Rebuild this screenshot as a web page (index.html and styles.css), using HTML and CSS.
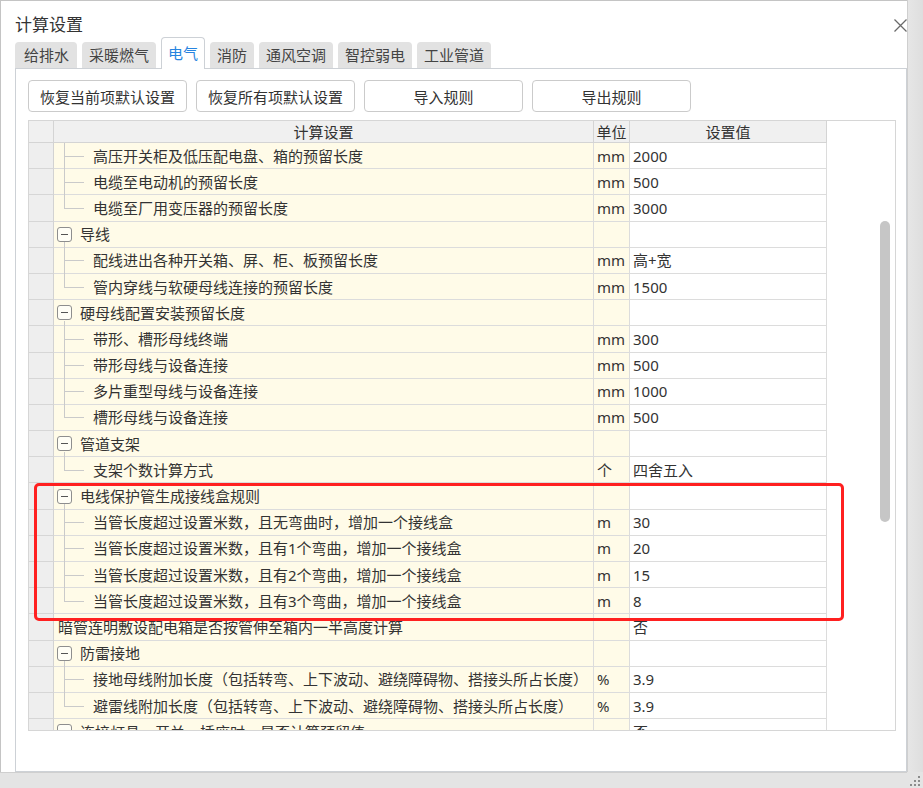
FILE: index.html
```html
<!DOCTYPE html>
<html lang="zh-CN">
<head>
<meta charset="utf-8">
<title>计算设置</title>
<link rel="stylesheet" href="styles.css">
</head>
<body>
<div class="screen">
  <div class="dialog">
    <div class="titlebar">
      <span class="title">计算设置</span>
      <svg class="close" width="13" height="13" viewBox="0 0 13 13"><path d="M0.5 0.5 L12.5 12.5 M12.5 0.5 L0.5 12.5" stroke="#6a6a6a" stroke-width="1.3" fill="none"/></svg>
    </div>
    <div class="tabs">
      <div class="tab tab-wide">给排水</div>
      <div class="tab">采暖燃气</div>
      <div class="tab active">电气</div>
      <div class="tab">消防</div>
      <div class="tab">通风空调</div>
      <div class="tab">智控弱电</div>
      <div class="tab">工业管道</div>
    </div>
    <div class="panel">
      <div class="toolbar">
        <button class="btn">恢复当前项默认设置</button>
        <button class="btn">恢复所有项默认设置</button>
        <button class="btn">导入规则</button>
        <button class="btn">导出规则</button>
      </div>
      <div class="grid">
        <div class="grid-body">
          <div class="row head">
            <div class="c rh"></div>
            <div class="c hc">计算设置</div>
            <div class="c hc">单位</div>
            <div class="c hc">设置值</div>
          </div>

          <div class="row"><div class="c rh"></div><div class="c name child">高压开关柜及低压配电盘、箱的预留长度</div><div class="c unit">mm</div><div class="c val">2000</div></div>
          <div class="row"><div class="c rh"></div><div class="c name child">电缆至电动机的预留长度</div><div class="c unit">mm</div><div class="c val">500</div></div>
          <div class="row"><div class="c rh"></div><div class="c name child last">电缆至厂用变压器的预留长度</div><div class="c unit">mm</div><div class="c val">3000</div></div>

          <div class="row"><div class="c rh"></div><div class="c name group"><span class="box"></span>导线</div><div class="c unit"></div><div class="c val"></div></div>
          <div class="row"><div class="c rh"></div><div class="c name child">配线进出各种开关箱、屏、柜、板预留长度</div><div class="c unit">mm</div><div class="c val">高+宽</div></div>
          <div class="row"><div class="c rh"></div><div class="c name child last">管内穿线与软硬母线连接的预留长度</div><div class="c unit">mm</div><div class="c val">1500</div></div>

          <div class="row"><div class="c rh"></div><div class="c name group"><span class="box"></span>硬母线配置安装预留长度</div><div class="c unit"></div><div class="c val"></div></div>
          <div class="row"><div class="c rh"></div><div class="c name child">带形、槽形母线终端</div><div class="c unit">mm</div><div class="c val">300</div></div>
          <div class="row"><div class="c rh"></div><div class="c name child">带形母线与设备连接</div><div class="c unit">mm</div><div class="c val">500</div></div>
          <div class="row"><div class="c rh"></div><div class="c name child">多片重型母线与设备连接</div><div class="c unit">mm</div><div class="c val">1000</div></div>
          <div class="row"><div class="c rh"></div><div class="c name child last">槽形母线与设备连接</div><div class="c unit">mm</div><div class="c val">500</div></div>

          <div class="row"><div class="c rh"></div><div class="c name group"><span class="box"></span>管道支架</div><div class="c unit"></div><div class="c val"></div></div>
          <div class="row"><div class="c rh"></div><div class="c name child last">支架个数计算方式</div><div class="c unit">个</div><div class="c val">四舍五入</div></div>

          <div class="row"><div class="c rh"></div><div class="c name group"><span class="box"></span>电线保护管生成接线盒规则</div><div class="c unit"></div><div class="c val"></div></div>
          <div class="row"><div class="c rh"></div><div class="c name child">当管长度超过设置米数，且无弯曲时，增加一个接线盒</div><div class="c unit">m</div><div class="c val">30</div></div>
          <div class="row"><div class="c rh"></div><div class="c name child">当管长度超过设置米数，且有1个弯曲，增加一个接线盒</div><div class="c unit">m</div><div class="c val">20</div></div>
          <div class="row"><div class="c rh"></div><div class="c name child">当管长度超过设置米数，且有2个弯曲，增加一个接线盒</div><div class="c unit">m</div><div class="c val">15</div></div>
          <div class="row"><div class="c rh"></div><div class="c name child last">当管长度超过设置米数，且有3个弯曲，增加一个接线盒</div><div class="c unit">m</div><div class="c val">8</div></div>

          <div class="row"><div class="c rh"></div><div class="c name leaf">暗管连明敷设配电箱是否按管伸至箱内一半高度计算</div><div class="c unit"></div><div class="c val">否</div></div>

          <div class="row"><div class="c rh"></div><div class="c name group"><span class="box"></span>防雷接地</div><div class="c unit"></div><div class="c val"></div></div>
          <div class="row"><div class="c rh"></div><div class="c name child">接地母线附加长度（包括转弯、上下波动、避绕障碍物、搭接头所占长度）</div><div class="c unit">%</div><div class="c val">3.9</div></div>
          <div class="row"><div class="c rh"></div><div class="c name child last">避雷线附加长度（包括转弯、上下波动、避绕障碍物、搭接头所占长度）</div><div class="c unit">%</div><div class="c val">3.9</div></div>

          <div class="row"><div class="c rh"></div><div class="c name group"><span class="box"></span>连接灯具、开关、插座时，是否计算预留值</div><div class="c unit"></div><div class="c val">否</div></div>
        </div>
        <div class="scroll"><div class="thumb"></div></div>
      </div>
    </div>
  </div>
  <div class="strip-right"></div>
  <div class="strip-bottom"></div>
  <div class="grip">
    <svg width="10" height="10" viewBox="0 0 10 10">
      <rect x="8" y="0" width="2" height="2" fill="#8c8c8c"/>
      <rect x="4" y="4" width="2" height="2" fill="#8c8c8c"/>
      <rect x="8" y="4" width="2" height="2" fill="#8c8c8c"/>
      <rect x="0" y="8" width="2" height="2" fill="#8c8c8c"/>
      <rect x="4" y="8" width="2" height="2" fill="#8c8c8c"/>
      <rect x="8" y="8" width="2" height="2" fill="#8c8c8c"/>
    </svg>
  </div>
  <div class="highlight"></div>
</div>
</body>
</html>
```

FILE: styles.css
```css
* { box-sizing: border-box; }

html, body {
  margin: 0;
  padding: 0;
}

body {
  font-family: "Noto Sans", "Noto Sans CJK SC", sans-serif;
  color: #333;
  background: #e4e4e4;
}

.screen {
  position: relative;
  width: 923px;
  height: 788px;
  display: grid;
  grid-template-columns: 907px 16px;
  grid-template-rows: 772px 16px;
  background: #e4e4e4;
}

.dialog {
  grid-column: 1;
  grid-row: 1;
  background: #fff;
  border-top: 1px solid #c4c4c4;
  border-left: 1px solid #c4c4c4;
  display: flex;
  flex-direction: column;
}

.strip-right {
  grid-column: 2;
  grid-row: 1;
  border-left: 1px solid #cfcfcf;
  background: linear-gradient(to right, #e6e6e6, #dedede);
}

.strip-bottom {
  grid-column: 1;
  grid-row: 2;
  border-top: 1px solid #cfcfcf;
  background: #e4e4e4;
}

.grip {
  grid-column: 2;
  grid-row: 2;
  background: #e4e4e4;
  display: flex;
  align-items: flex-end;
  justify-content: flex-end;
  padding: 0 3px 2px 0;
}

.grip svg { display: block; }

.titlebar {
  height: 36px;
  padding: 12px 0 0 14px;
  display: flex;
  align-items: center;
  justify-content: space-between;
}

.title {
  font-size: 17px;
  line-height: 24px;
  color: #333;
}

.close {
  display: block;
  margin-right: 0;
  flex: none;
}

.tabs {
  height: 31px;
  padding-left: 14px;
  display: flex;
  align-items: flex-end;
  gap: 5px;
  position: relative;
  z-index: 2;
}

.tab {
  height: 26px;
  padding: 0 7px;
  background: #e2e2e2;
  border-radius: 4px 4px 0 0;
  font-size: 15px;
  line-height: 26px;
  color: #444;
  white-space: nowrap;
}

.tab-wide { padding: 0 8px 0 9px; }

.tab.active {
  height: 32px;
  margin-bottom: -1px;
  background: #fff;
  border: 1px solid #cdd1d6;
  border-bottom: none;
  color: #2784e0;
  line-height: 30px;
  padding: 0 6px;
}

.panel {
  flex: 1;
  margin-left: 14px;
  border: 1px solid #cdd1d6;
  padding: 11px 0 0 12px;
  display: flex;
  flex-direction: column;
  min-height: 0;
}

.toolbar {
  display: flex;
  gap: 9px;
}

.btn {
  width: 159px;
  height: 32px;
  background: #fff;
  border: 1px solid #cbcbcb;
  border-radius: 4px;
  font-family: "Noto Sans", "Noto Sans CJK SC", sans-serif;
  font-size: 15px;
  color: #333;
  padding: 0;
}

.grid {
  margin-top: 8px;
  width: 868px;
  height: 611px;
  border: 1px solid #d6d6d6;
  background: #fff;
  display: flex;
  overflow: hidden;
}

.grid-body {
  width: 798px;
  flex: none;
}

.row {
  display: grid;
  grid-template-columns: 25px 540px 36px 197px;
  height: 26.2px;
}

.c {
  border-right: 1px solid #dcdcdc;
  border-bottom: 1px solid #dcdcdc;
  font-size: 15px;
  line-height: 20px;
  white-space: nowrap;
  overflow: hidden;
  display: flex;
  align-items: center;
}

.rh {
  background: #eeeeee;
  border-right-color: #d2d2d2;
  border-bottom-color: #d6d6d6;
}

.row.head {
  height: 22px;
}

.head .c {
  background: #f0f0f0;
  border-right-color: #d4d4d4;
  border-bottom-color: #d4d4d4;
  justify-content: center;
}

.name {
  background: #fffbe8;
  position: relative;
  overflow: visible;
}

.unit {
  background: #fffbe8;
  padding-left: 3px;
}

.val {
  background: #fff;
  padding-left: 3px;
}

.name.child { padding-left: 39px; }
.name.leaf { padding-left: 4px; }
.name.group { padding-left: 3px; }

.name.child::before {
  content: "";
  position: absolute;
  left: 10px;
  top: 0;
  bottom: -1px;
  width: 1px;
  background: #cacaca;
}

.name.child.last::before {
  bottom: auto;
  height: 50%;
}

.name.child::after {
  content: "";
  position: absolute;
  left: 10px;
  top: 50%;
  width: 20px;
  height: 1px;
  background: #cacaca;
}

.name.group::after {
  content: "";
  position: absolute;
  left: 10px;
  top: calc(50% + 8px);
  bottom: -1px;
  width: 1px;
  background: #cacaca;
}

.box {
  width: 15px;
  height: 15px;
  margin-right: 8px;
  border: 1px solid #8e8e8e;
  border-radius: 3px;
  background: #fffef6;
  display: flex;
  align-items: center;
  justify-content: center;
  flex: none;
}

.box::after {
  content: "";
  width: 7px;
  height: 1px;
  background: #555;
}

.scroll {
  flex: 1;
  display: flex;
  justify-content: flex-end;
  padding: 100px 5px 0 0;
}

.thumb {
  width: 10px;
  height: 301px;
  border-radius: 5px;
  background: #c6c6c6;
}

.highlight {
  position: absolute;
  left: 34px;
  top: 483px;
  width: 810px;
  height: 138px;
  border: 3.5px solid #ff2020;
  border-radius: 5px;
  pointer-events: none;
}
```
